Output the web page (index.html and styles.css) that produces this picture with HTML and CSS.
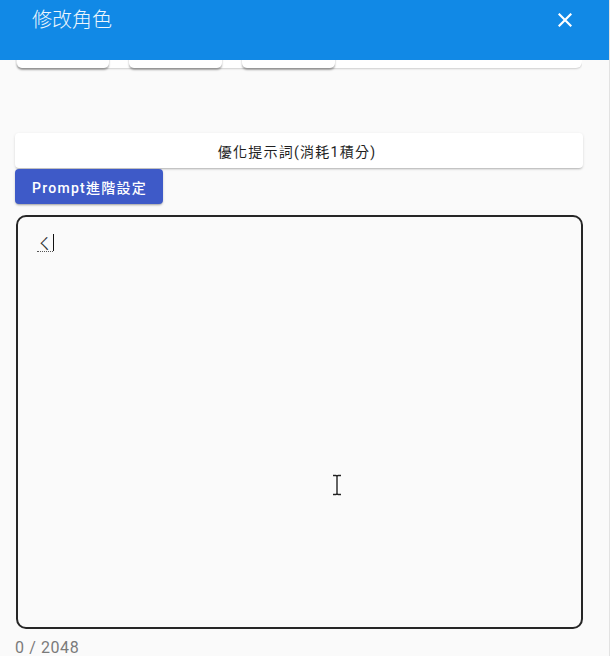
FILE: index.html
```html
<!DOCTYPE html>
<html lang="zh-Hant">
<head>
<meta charset="utf-8">
<title>修改角色</title>
<link rel="stylesheet" href="styles.css">
</head>
<body>
<div class="dialog">
  <header class="bar">
    <div class="title">修改角色</div>
    <button class="close" aria-label="close">
      <svg width="14" height="14" viewBox="0 0 14 14"><path d="M1.5 1.5 L12.5 12.5 M12.5 1.5 L1.5 12.5" stroke="#fff" stroke-width="2.2" stroke-linecap="square"/></svg>
    </button>
  </header>
  <main class="content">
    <div class="strip">
      <div class="tabcard">
        <span class="tab t1"></span>
        <span class="tab t2"></span>
        <span class="tab t3"></span>
      </div>
    </div>
    <button class="btn optimize">優化提示詞(消耗1積分)</button>
    <button class="btn prompt">Prompt進階設定</button>
    <div class="field">
      <div class="input"><span class="compose">ㄑ</span><span class="caret"></span></div>
      <svg class="ibeam" width="10" height="22" viewBox="0 0 10 22"><path d="M1 1.5 H4 Q5 1.5 5 3 V19 Q5 20.5 4 20.5 H1 M9 1.5 H6 Q5 1.5 5 3 M5 19 Q5 20.5 6 20.5 H9" fill="none" stroke="#fff" stroke-width="3"/><path d="M1 1.5 H4 Q5 1.5 5 3 V19 Q5 20.5 4 20.5 H1 M9 1.5 H6 Q5 1.5 5 3 M5 19 Q5 20.5 6 20.5 H9" fill="none" stroke="#222" stroke-width="1.4"/></svg>
    </div>
    <div class="counter">0 / 2048</div>
  </main>
</div>
</body>
</html>
```
FILE: styles.css
```css
html, body {
  margin: 0;
  padding: 0;
  height: 100%;
  overflow: hidden;
}
body {
  font-family: Roboto, "Noto Sans CJK TC", "Noto Sans", sans-serif;
  background: #fafafa;
}
.dialog {
  width: 610px;
  height: 656px;
  display: flex;
  flex-direction: column;
  border-right: 1px solid #e2e2e2;
  box-sizing: border-box;
}
.bar {
  height: 60px;
  flex: none;
  background: #1189e6;
  display: flex;
  align-items: flex-start;
  justify-content: space-between;
  padding: 0 37px 0 32px;
  position: relative;
  z-index: 2;
}
.title {
  color: #eef6fd;
  font-size: 20px;
  line-height: 20px;
  margin-top: 9px;
  font-weight: 300;
  font-family: "Noto Sans CJK TC", sans-serif;
}
.close {
  background: none;
  border: 0;
  padding: 0;
  margin-top: 13px;
  width: 14px;
  height: 14px;
  display: block;
}
.close svg { display: block; }
.content {
  flex: 1;
  display: flex;
  flex-direction: column;
  align-items: flex-start;
  padding: 0 27px 0 15px;
  background: #fafafa;
}
.strip {
  height: 12px;
  width: 100%;
  overflow: hidden;
  display: flex;
  align-items: flex-end;
  flex: none;
}
.tabcard {
  height: 30px;
  width: 565px;
  margin-left: 1px;
  margin-bottom: 4px;
  background: #fff;
  border-radius: 0 0 6px 6px;
  box-shadow: 0 1px 2px rgba(0,0,0,0.18);
  display: flex;
  align-items: flex-end;
  gap: 20px;
  padding-left: 1px;
}
.tab {
  width: 92px;
  height: 30px;
  background: #fff;
  border-radius: 0 0 5px 5px;
  box-shadow: 0 2px 2px rgba(0,0,0,0.32);
}
.tab.t2 { width: 93px; }
.tab.t3 { width: 93px; }
.btn {
  border: 0;
  font-family: Roboto, "Noto Sans CJK TC", sans-serif;
  font-size: 14px;
  letter-spacing: 1.25px;
  border-radius: 4px;
  display: flex;
  align-items: center;
  justify-content: center;
  padding: 0;
  flex: none;
}
.optimize {
  margin-top: 61px;
  width: 568px;
  height: 35px;
  background: #fff;
  color: #1f1f1f;
  font-weight: 400;
  box-shadow: 0 2px 2px -1px rgba(0,0,0,0.2), 0 1px 3px rgba(0,0,0,0.12);
  padding-right: 4px;
}
.prompt {
  margin-top: 1px;
  width: 148px;
  height: 35px;
  background: #3e5ac8;
  color: #fff;
  font-weight: 500;
  box-shadow: 0 2px 2px -1px rgba(0,0,0,0.25), 0 1px 3px rgba(0,0,0,0.15);
  padding-left: 1px;
}
.field {
  margin-top: 11px;
  margin-left: 1px;
  width: 567px;
  height: 414px;
  flex: none;
  box-sizing: border-box;
  border: 2px solid #262626;
  border-radius: 10px;
  position: relative;
  background: #fafafa;
}
.input {
  display: flex;
  align-items: flex-start;
  padding: 17px 0 0 19px;
  font-size: 15px;
  line-height: 17px;
  color: #333;
  font-family: "Noto Sans CJK TC", sans-serif;
}
.compose {
  border-bottom: 1px dotted #555;
  padding-right: 1px;
}
.caret {
  width: 1px;
  height: 17px;
  background: #111;
}
.ibeam {
  position: absolute;
  left: 314px;
  top: 257px;
}
.counter {
  margin-top: 11px;
  font-size: 16px;
  line-height: 16px;
  letter-spacing: 0.6px;
  color: #7a7a7a;
}
```
